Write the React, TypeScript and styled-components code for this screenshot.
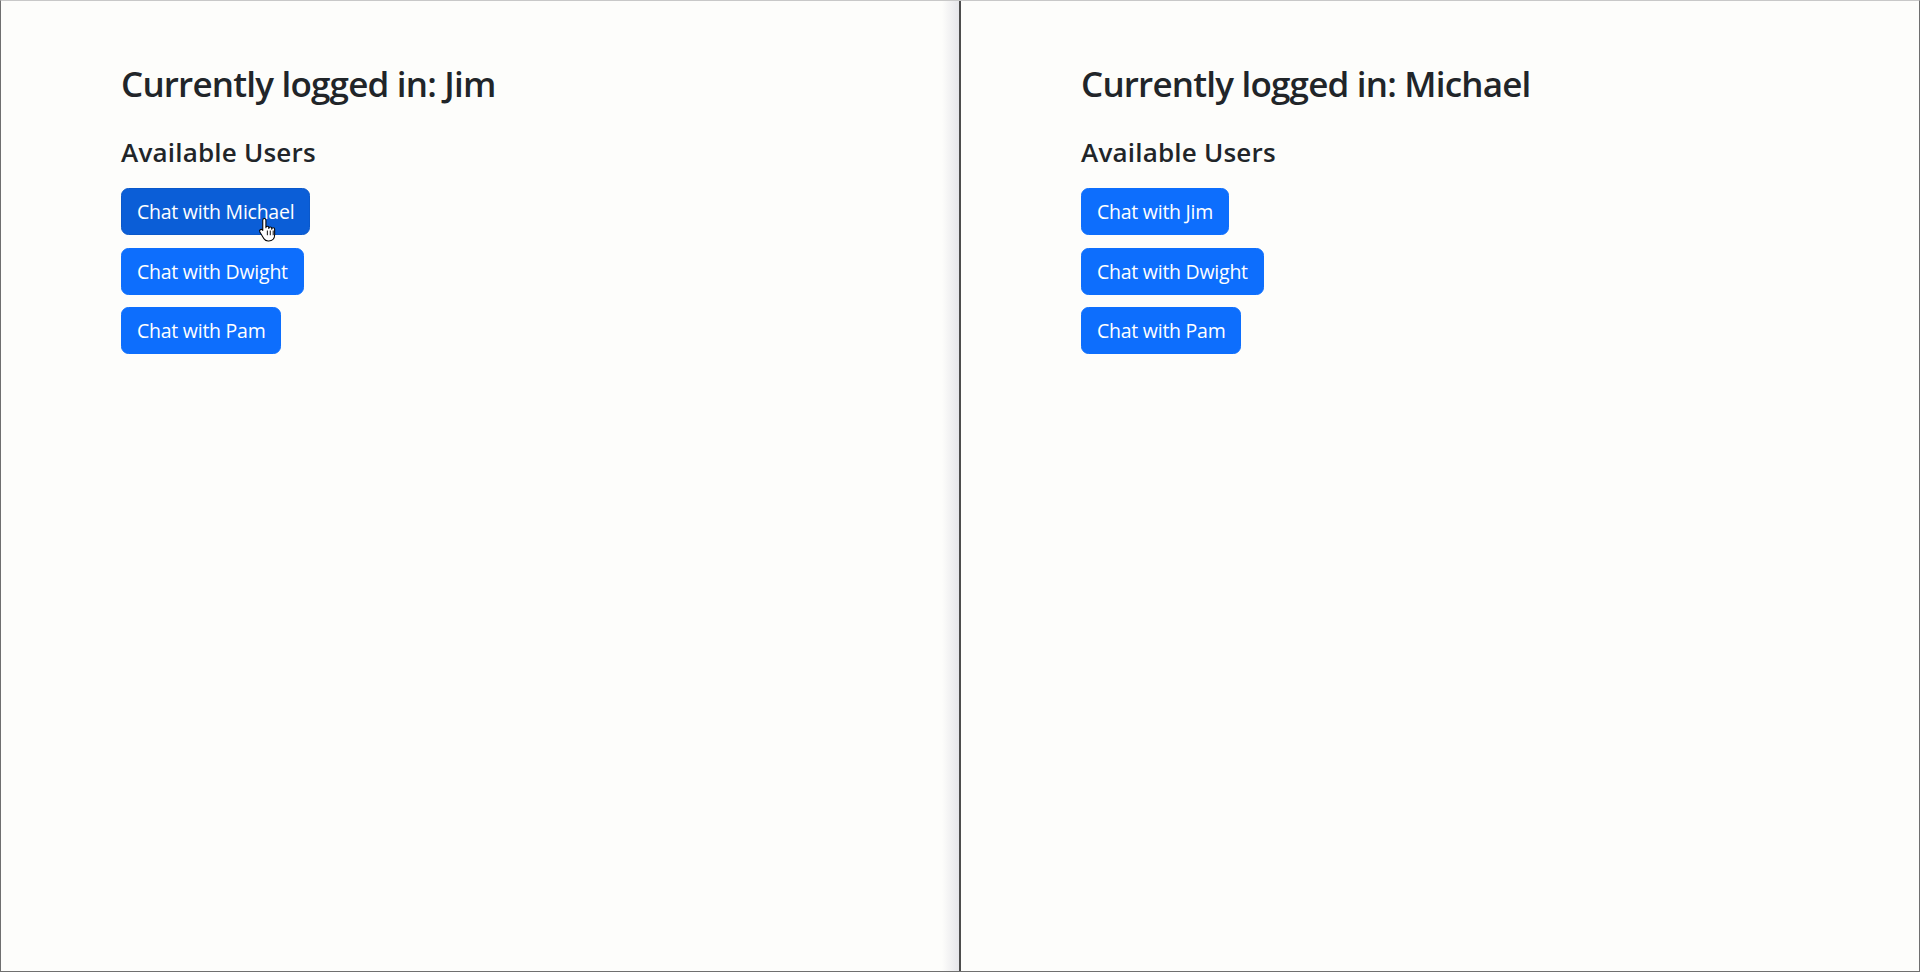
import styled, { createGlobalStyle } from "styled-components";

const GlobalStyle = createGlobalStyle`
  html, body {
    margin: 0;
    padding: 0;
    background: #fdfdfb;
  }
  * {
    box-sizing: border-box;
  }
`;

const Frame = styled.div`
  display: grid;
  grid-template-columns: 958px 1fr;
  height: 972px;
  border: 1px solid #6f6f6f;
  border-top-color: #c8c8c8;
  font-family: "Open Sans", "Noto Sans", sans-serif;
  color: #212529;
`;

const Pane = styled.section<{ $divider?: boolean }>`
  padding: 62px 120px 0;
  border-left: ${(p) => (p.$divider ? "2px solid #4d4d4d" : "none")};
  background: ${(p) =>
    p.$divider
      ? "#fdfdfb"
      : "linear-gradient(to right, #fdfdfb calc(100% - 17px), #e6e6ea 100%)"};
`;

const Title = styled.h2`
  margin: 0 0 32px;
  font-size: 35px;
  font-weight: 600;
  line-height: 42px;
  letter-spacing: -0.8px;
`;

const Subtitle = styled.h5`
  margin: 0 0 21px;
  font-size: 26px;
  font-weight: 600;
  line-height: 30px;
  letter-spacing: 0.2px;
`;

const UserList = styled.div`
  display: flex;
  flex-direction: column;
  align-items: flex-start;
  gap: 12.5px;
`;

const ChatButton = styled.button<{ $hover?: boolean }>`
  position: relative;
  height: 47px;
  padding: 0 15px;
  border: 1px solid ${(p) => (p.$hover ? "#0a58ca" : "#0d6efd")};
  border-radius: 7.5px;
  background: ${(p) => (p.$hover ? "#0b5ed7" : "#0d6efd")};
  color: #fff;
  font-family: "Open Sans", "Noto Sans", sans-serif;
  font-size: 19.5px;
  letter-spacing: -0.25px;
  cursor: pointer;
`;

const Pointer = styled.svg`
  position: absolute;
  left: 136px;
  top: 28px;
  width: 21px;
  height: 25px;
`;

const HandCursor = () => (
  <Pointer viewBox="0 0 20 24">
    <path
      d="M6 1.5c.9 0 1.5.6 1.5 1.5v7.2c0-.9.6-1.4 1.4-1.4s1.4.6 1.4 1.4v.8c0-.9.6-1.4 1.4-1.4s1.4.6 1.4 1.4v.8c0-.9.6-1.4 1.4-1.4s1.4.6 1.4 1.4v5.5c0 3.4-2.4 5.7-5.6 5.7H9.6c-2 0-3.2-.9-4.3-2.5L1.7 14.4c-.5-.8-.3-1.7.4-2.2.7-.5 1.6-.3 2.1.3l.3.4V3c0-.9.6-1.5 1.5-1.5z"
      fill="#fff"
      stroke="#000"
      strokeWidth="1"
      strokeLinejoin="round"
    />
    <path d="M8.9 13v4.5M11.7 13v4.5M14.5 13v4.5" stroke="#000" strokeWidth="0.9" />
  </Pointer>
);

type UserPaneProps = {
  current: string;
  others: string[];
  hovered?: string;
  divider?: boolean;
};

const UserPane = ({ current, others, hovered, divider }: UserPaneProps) => (
  <Pane $divider={divider}>
    <Title>Currently logged in: {current}</Title>
    <Subtitle>Available Users</Subtitle>
    <UserList>
      {others.map((name) => (
        <ChatButton key={name} $hover={name === hovered}>
          Chat with {name}
          {name === hovered && <HandCursor />}
        </ChatButton>
      ))}
    </UserList>
  </Pane>
);

const App = () => (
  <>
    <GlobalStyle />
    <Frame>
      <UserPane current="Jim" others={["Michael", "Dwight", "Pam"]} hovered="Michael" />
      <UserPane current="Michael" others={["Jim", "Dwight", "Pam"]} divider />
    </Frame>
  </>
);

export default App;
